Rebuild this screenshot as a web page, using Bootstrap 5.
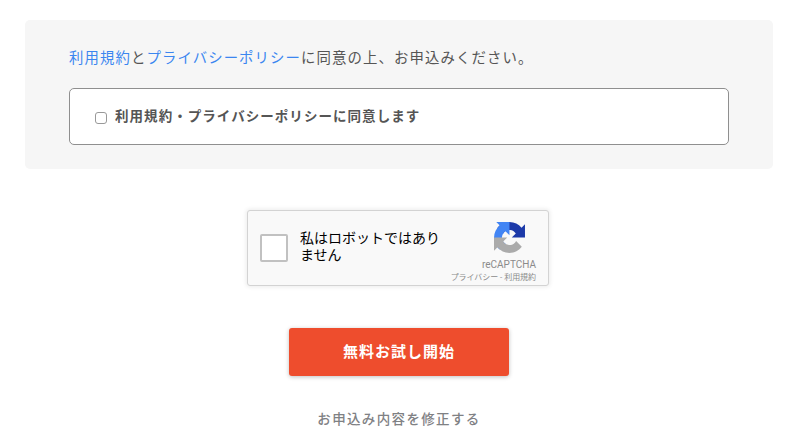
<!DOCTYPE html>
<html lang="ja">
<head>
<meta charset="utf-8">
<title>お申込み</title>
<link href="https://cdn.jsdelivr.net/npm/bootstrap@5.3.0/dist/css/bootstrap.min.css" rel="stylesheet">
<style>
body{font-family:"Liberation Sans","Noto Sans CJK JP",sans-serif;color:#555;background:#fff;overflow:hidden}
.page-wrap{padding:20px 31px 0 25px}
.terms-panel{background:#f6f6f6;border-radius:5px;padding:28px 44px 24px;height:149px}
.terms-lead{font-size:14.4px;letter-spacing:1.1px;line-height:20px;margin:0 0 20px;color:#555}
.terms-lead a{color:#3b86f0;text-decoration:none}
.agree-box{height:57px;background:#fff;border:1px solid #8f8f8f;border-radius:5px;padding:0 25px;gap:8px}
.agree-box input{width:12px;height:12px;margin:2px 0 0;appearance:none;background:#fff;border:1px solid #999;border-radius:3px;flex:none}
.agree-box label{font-size:13.5px;font-weight:700;letter-spacing:1.05px;color:#555;margin:2px 0 0}
.cap-row{margin-top:41px}
.cap-box{width:302px;height:76px;margin-right:2px;background:#f9f9f9;border:1px solid #d3d3d3;border-radius:3px;box-shadow:0 0 4px 1px rgba(0,0,0,.08);padding:0 12px;font-family:Roboto,"Noto Sans CJK JP",sans-serif}
.cap-check{width:28px;height:28px;background:#fff;border:2px solid #c1c1c1;border-radius:2px;flex:none}
.cap-text{width:146px;margin-left:12px;padding-bottom:3px;font-size:14px;line-height:17px;color:#000}
.cap-side{width:90px;margin-right:-1px;height:100%;padding-top:11px}
.cap-logo{width:31px;height:31px;display:block;margin-right:12px}
.cap-brand{font-size:10px;line-height:12px;color:#8b8b8b;margin-top:6px;margin-right:1px}
.cap-links{font-size:8px;line-height:10px;letter-spacing:-.05px;color:#8b8b8b;margin-top:2px;margin-right:1px;white-space:nowrap}
.go-row{margin-top:42px}
.go-btn{width:220px;height:48px;background:#ee4d2d;border:0;border-radius:3px;color:#fff;font-size:15px;font-weight:700;letter-spacing:1px;box-shadow:0 1px 4px rgba(0,0,0,.25)}
.go-btn:hover{background:#ee4d2d;color:#fff}
.back-row{margin-top:31px}
.back-link{font-size:13.5px;font-weight:500;letter-spacing:1.35px;line-height:20px;color:#7f8184;text-decoration:none}
</style>
</head>
<body>
<div class="page-wrap">
  <div class="terms-panel">
    <p class="terms-lead"><a href="#">利用規約</a>と<a href="#">プライバシーポリシー</a>に同意の上、お申込みください。</p>
    <div class="agree-box d-flex align-items-center">
      <input type="checkbox" id="agree">
      <label for="agree">利用規約・プライバシーポリシーに同意します</label>
    </div>
  </div>
  <div class="cap-row d-flex justify-content-center">
    <div class="cap-box d-flex align-items-center">
      <div class="cap-check"></div>
      <div class="cap-text">私はロボットではありません</div>
      <div class="cap-side d-flex flex-column align-items-end ms-auto">
        <svg class="cap-logo" viewBox="0 0 64 64" aria-hidden="true">
          <path fill="#1c3aa9" d="M64 31.955l-.033-1.37V4.687l-7.16 7.16C50.948 4.674 42.033.093 32.05.093c-10.4 0-19.622 4.96-25.458 12.64l11.736 11.86a15.55 15.55 0 0 1 4.754-5.334c2.05-1.6 4.952-2.906 8.968-2.906.485 0 .86.057 1.135.163 4.976.393 9.29 3.14 11.83 7.124l-8.307 8.307c10.522-.04 22.4-.066 27.295.005"/>
          <path fill="#4285f4" d="M31.95.001l-1.37.033H4.687l7.16 7.16C4.674 13.053.093 21.968.093 31.95c0 10.4 4.96 19.622 12.64 25.458l11.86-11.736a15.55 15.55 0 0 1-5.334-4.754c-1.6-2.05-2.906-4.952-2.906-8.968 0-.485.057-.86.163-1.135.393-4.976 3.14-9.29 7.124-11.83l8.307 8.307c-.04-10.522-.066-22.4.005-27.295"/>
          <path fill="#ababab" d="M.001 32l.033 1.37v25.898l7.16-7.16c5.86 7.173 14.774 11.754 24.757 11.754 10.4 0 19.622-4.96 25.458-12.64l-11.736-11.86a15.55 15.55 0 0 1-4.754 5.334c-2.05 1.6-4.952 2.906-8.968 2.906-.485 0-.86-.057-1.135-.163-4.976-.393-9.29-3.14-11.83-7.124l8.307-8.307c-10.522.04-22.4.066-27.295-.005"/>
        </svg>
        <div class="cap-brand">reCAPTCHA</div>
        <div class="cap-links">プライバシー - 利用規約</div>
      </div>
    </div>
  </div>
  <div class="go-row d-flex justify-content-center"><button type="button" class="btn go-btn">無料お試し開始</button></div>
  <div class="back-row text-center"><a class="back-link" href="#">お申込み内容を修正する</a></div>
</div>
<script src="https://cdn.jsdelivr.net/npm/bootstrap@5.3.0/dist/js/bootstrap.bundle.min.js"></script>
</body>
</html>
